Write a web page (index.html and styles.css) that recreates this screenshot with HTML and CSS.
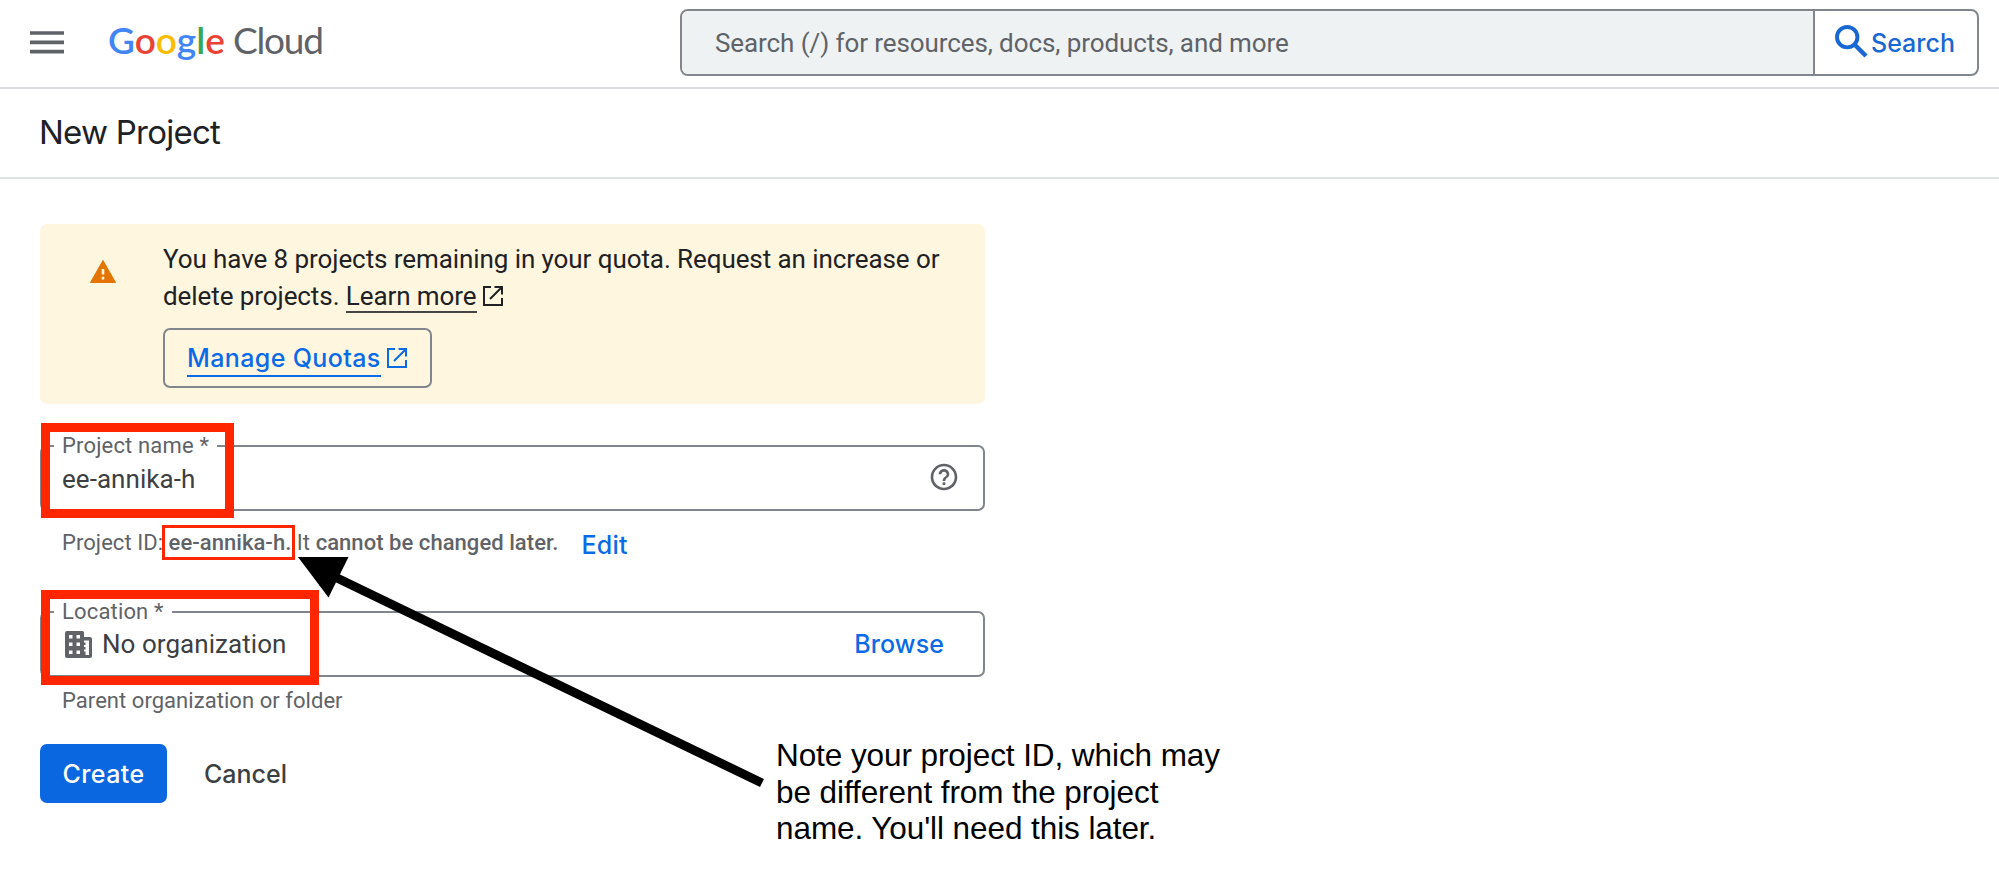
FILE: index.html
```html
<!DOCTYPE html>
<html lang="en">
<head>
<meta charset="utf-8">
<title>New Project – Google Cloud</title>
<link rel="stylesheet" href="styles.css">
</head>
<body>
<header class="topbar">
  <div class="brand">
    <svg class="menu" viewBox="0 0 34 24"><path d="M0 2h34M0 11.3h34M0 20.6h34" stroke="#5f6368" stroke-width="3.7"/></svg>
    <div class="logo"><span class="google"><span class="blue">G</span><span class="red">o</span><span class="yellow">o</span><span class="blue">g</span><span class="green">l</span><span class="red">e</span></span><span class="cloud">Cloud</span></div>
  </div>
  <div class="search">
    <div class="search-input">Search (/) for resources, docs, products, and more</div>
    <div class="search-btn">
      <svg class="glass" viewBox="0 0 33 33"><circle cx="12.2" cy="12.2" r="10.2" fill="none" stroke="#1967d2" stroke-width="3.9"/><path d="M19.5 19.5L31 31" stroke="#1967d2" stroke-width="4.4"/></svg>
      <span>Search</span>
    </div>
  </div>
</header>
<div class="titlebar"><h1>New Project</h1></div>
<main class="content">
  <section class="alert">
    <svg class="warn" viewBox="0 0 26 23"><path d="M13 0.500L25.500 22.500H0.500Z" fill="#e37400" stroke="#e37400" stroke-linejoin="round"/><path d="M11.700 9h2.600v5.600h-2.600zM11.700 16.800h2.600v2.700h-2.600z" fill="#fef7e0"/></svg>
    <div class="alert-body">
      <p>You have 8 projects remaining in your quota. Request an increase or<br>delete projects. <span class="learn">Learn more</span><svg class="ext" viewBox="0 0 20 20"><path d="M8 1H1V19H19V12M11.500 1H19V8.500M18.500 1.500L7 13" fill="none" stroke="#202124" stroke-width="2"/></svg></p>
      <div class="quota-btn"><span class="quota">Manage Quotas</span><svg class="ext" viewBox="0 0 20 20"><path d="M8 1H1V19H19V12M11.500 1H19V8.500M18.500 1.500L7 13" fill="none" stroke="#0b6be6" stroke-width="2"/></svg></div>
    </div>
  </section>
  <fieldset class="field name">
    <legend>Project name *</legend>
    <span class="value">ee-annika-h</span>
    <svg class="help" viewBox="0 0 24 24"><path fill="#5f6368" d="M11 18h2v-2h-2v2zm1-16C6.480 2 2 6.480 2 12s4.480 10 10 10 10-4.480 10-10S17.520 2 12 2zm0 18c-4.410 0-8-3.590-8-8s3.590-8 8-8 8 3.590 8 8-3.590 8-8 8zm0-14c-2.210 0-4 1.790-4 4h2c0-1.100.9-2 2-2s2 .9 2 2c0 2-3 1.750-3 5h2c0-2.250 3-2.500 3-5 0-2.210-1.790-4-4-4z"/></svg>
  </fieldset>
  <div class="hint id-hint"><span>Project ID: <b>ee-annika-h.</b> It <b>cannot be changed later.</b></span><a class="edit">Edit</a></div>
  <fieldset class="field loc">
    <legend>Location *</legend>
    <svg class="org" viewBox="0 0 27 27"><path fill="#5f6368" fill-rule="evenodd" d="M2 0H17.500Q19 0 19 1.500V6H25Q27 6 27 8V25Q27 27 25 27H2Q0 27 0 25V2Q0 0 2 0ZM4 4V7.500H7.500V4ZM11.500 4V7.500H15V4ZM4 11.500V15H7.500V11.500ZM11.500 11.500V15H15V11.500ZM4 19.500V23H7.500V19.500ZM11.500 19.500V23H15V19.500ZM19 9.500V11.500H20.500V14H19V16H20.500V18.500H19V20.500H20.500V24H24V9.500Z"/></svg>
    <span class="value">No organization</span>
    <a class="browse">Browse</a>
  </fieldset>
  <div class="hint parent-hint">Parent organization or folder</div>
  <div class="actions"><button class="create">Create</button><button class="cancel">Cancel</button></div>
</main>
<div class="mark mark-name"></div>
<div class="mark mark-id"></div>
<div class="mark mark-loc"></div>
<svg class="arrow" viewBox="0 0 500 250"><path d="M45 27L472 233" stroke="#000" stroke-width="9"/><path d="M8 7H58.500L38.500 47.500Z"/></svg>
<p class="note">Note your project ID, which may<br>be different from the project<br>name. You'll need this later.</p>
</body>
</html>
```
FILE: styles.css
```css
* { box-sizing: border-box; }
body { margin: 0; width: 1999px; height: 870px; background: #fff; color: #202124; font-family: Roboto, sans-serif; position: relative; overflow: hidden; }
.topbar { height: 89px; border-bottom: 2px solid #dadce0; display: flex; justify-content: space-between; padding: 9px 20px 0 30px; }
.brand { display: flex; gap: 44px; height: 67px; align-items: center; }
.menu { width: 34px; height: 24px; }
.logo { font-family: Lato, sans-serif; font-size: 37px; line-height: 44px; display: flex; gap: 8px; color: #5f6368; padding-bottom: 5px; }
.google { font-weight: 600; }
.cloud { letter-spacing: -1.200px; }
.blue { color: #4285f4; }
.red { color: #ea4335; }
.yellow { color: #fbbc04; }
.green { color: #34a853; }
.search { width: 1299px; height: 67px; border: 2px solid #80868b; border-radius: 8px; display: flex; overflow: hidden; }
.search-input { flex: 1; background: #eef2f3; border-right: 2px solid #80868b; padding-left: 33px; line-height: 65px; font-size: 26px; letter-spacing: -0.090px; color: #5f6368; }
.search-btn { width: 162px; display: flex; align-items: center; padding-left: 20px; gap: 3px; font: 500 25px Inter, sans-serif; color: #1967d2; }
.glass { width: 33px; height: 33px; margin-top: -3px; }
.titlebar { height: 90px; border-bottom: 2px solid #e0e3e4; padding-left: 39px; }
h1 { margin: 0; font: 400 33px/87px Inter, sans-serif; letter-spacing: -0.750px; }
.content { padding: 45px 0 0 40px; width: 985px; }
.alert { height: 180px; background: #fef6df; border-radius: 7px; display: flex; padding: 17px 0 0 50px; gap: 47px; }
.warn { width: 26px; height: 23px; margin-top: 19px; }
.alert-body p { margin: 0; font-size: 26px; line-height: 37px; letter-spacing: -0.080px; white-space: nowrap; }
.learn { border-bottom: 2px solid #444; }
.ext { width: 20px; height: 20px; margin-left: 6px; }
.alert-body p .ext { vertical-align: -1px; }
.quota-btn { margin-top: 13px; width: 269px; height: 60px; border: 2px solid #80868b; border-radius: 7px; display: flex; align-items: center; padding: 3px 0 0 22px; color: #0b6be6; font: 500 25px/33px Inter, sans-serif; letter-spacing: 0.380px; }
.quota { border-bottom: 2px solid #0b6be6; }
.quota-btn .ext { margin-top: -3px; }
.field { height: 78px; margin: 0; border: 2px solid #80868b; border-radius: 7px; padding: 0 23px 0 20px; display: flex; }
legend { margin-left: -8px; padding: 0 8px; font-size: 22px; line-height: 26px; letter-spacing: 0.160px; color: #5f6368; }
.value { font-size: 26px; line-height: 40px; letter-spacing: 0.050px; color: #3c4043; flex: 1; }
.name { margin-top: 29px; }
.help { width: 32px; height: 32px; margin-top: 2px; }
.hint { padding-left: 22px; font-size: 22px; line-height: 30px; letter-spacing: 0.050px; color: #5f6368; }
.id-hint { height: 88px; padding-top: 17px; display: flex; gap: 23px; }
.parent-hint { padding-top: 9px; }
b { font-weight: 500; }
.edit, .browse { font: 500 25px/30px Inter, sans-serif; color: #0b6be6; }
.edit { line-height: 34px; letter-spacing: 0.250px; }
.loc { padding-right: 39px; }
.loc .value { line-height: 39px; }
.browse { line-height: 38px; letter-spacing: 0.100px; }
.org { width: 27px; height: 27px; margin: 6px 10px 0 3px; }
.actions { display: flex; gap: 37px; margin-top: 28px; }
button { border: 0; background: none; padding: 0; height: 59px; font: 500 25px Inter, sans-serif; color: #3c4043; }
.create { width: 127px; background: #0b67e0; color: #fff; border-radius: 7px; letter-spacing: 0.400px; }
.mark { position: absolute; border: 9px solid #ff2600; }
.mark-name { left: 41px; top: 423px; width: 193px; height: 95px; }
.mark-id { left: 162px; top: 525px; width: 133px; height: 35px; border-width: 3px; }
.mark-loc { left: 41px; top: 590px; width: 278px; height: 95px; }
.arrow { position: absolute; left: 290px; top: 550px; width: 500px; height: 250px; }
.note { position: absolute; left: 776px; top: 737px; margin: 0; font: 31.500px/36.500px "Liberation Sans", Arial, sans-serif; letter-spacing: -0.080px; color: #000; white-space: nowrap; }
```
